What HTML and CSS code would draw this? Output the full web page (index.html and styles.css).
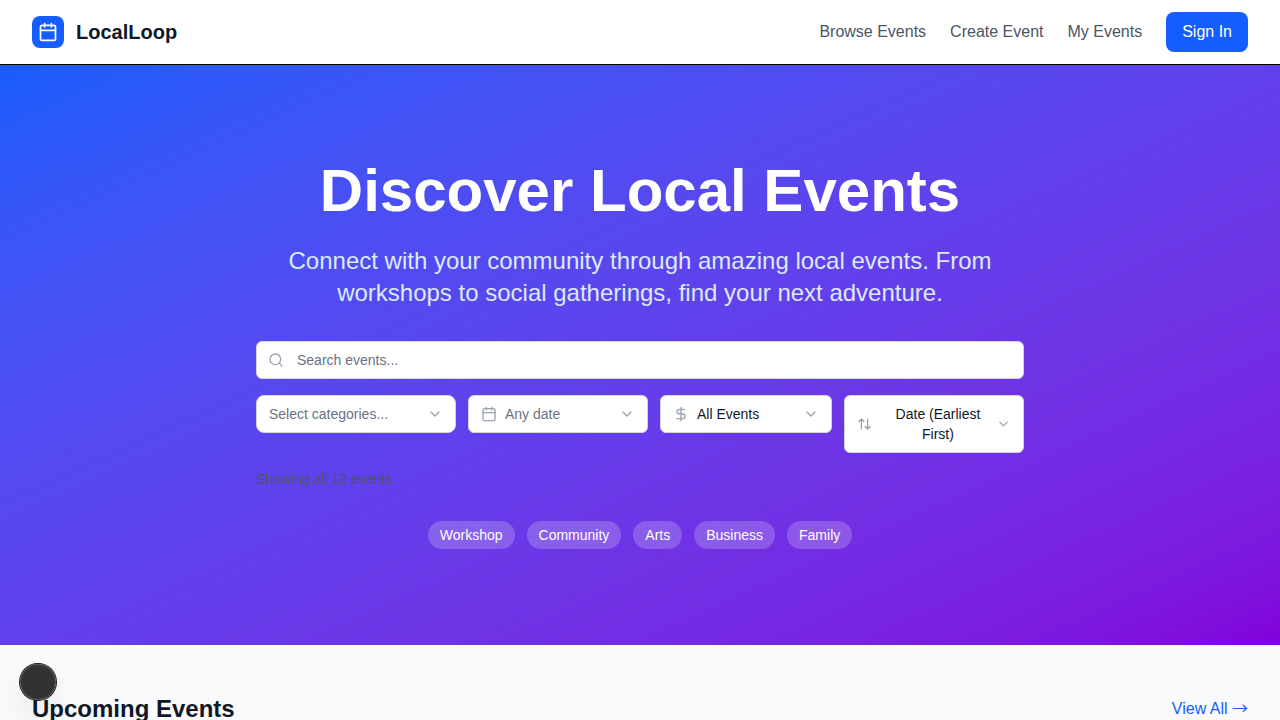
FILE: index.html
```html
<!DOCTYPE html>
<html lang="en">
<head>
<meta charset="utf-8">
<title>LocalLoop</title>
<link rel="stylesheet" href="styles.css">
</head>
<body>
<header class="header">
  <a class="brand">
    <span class="brand-mark"><svg class="icon icon-20" viewBox="0 0 24 24"><path d="M8 2v4M16 2v4M3 10h18"/><rect x="3" y="4" width="18" height="18" rx="2"/></svg></span>
    <span class="brand-name">LocalLoop</span>
  </a>
  <nav class="nav">
    <a>Browse Events</a>
    <a>Create Event</a>
    <a>My Events</a>
    <a class="sign-in">Sign In</a>
  </nav>
</header>
<section class="hero">
  <h1 class="hero-title">Discover Local Events</h1>
  <p class="hero-text">Connect with your community through amazing local events. From workshops to social gatherings, find your next adventure.</p>
  <div class="filters">
    <div class="field search">
      <svg class="icon icon-16" viewBox="0 0 24 24"><circle cx="11" cy="11" r="8"/><path d="m21 21-4.3-4.3"/></svg>
      <span>Search events...</span>
    </div>
    <div class="filter-row">
      <div class="field select categories">
        <span class="label muted">Select categories...</span>
        <svg class="icon icon-16" viewBox="0 0 24 24"><path d="m6 9 6 6 6-6"/></svg>
      </div>
      <div class="field select date">
        <svg class="icon icon-16" viewBox="0 0 24 24"><path d="M8 2v4M16 2v4M3 10h18"/><rect x="3" y="4" width="18" height="18" rx="2"/></svg>
        <span class="label muted">Any date</span>
        <svg class="icon icon-16" viewBox="0 0 24 24"><path d="m6 9 6 6 6-6"/></svg>
      </div>
      <div class="field select price">
        <svg class="icon icon-16" viewBox="0 0 24 24"><path d="M12 2v20M17 5H9.5a3.5 3.5 0 0 0 0 7h5a3.5 3.5 0 0 1 0 7H6"/></svg>
        <span class="label">All Events</span>
        <svg class="icon icon-16" viewBox="0 0 24 24"><path d="m6 9 6 6 6-6"/></svg>
      </div>
      <div class="field select sort">
        <svg class="icon icon-sort" viewBox="0 0 24 24"><path d="m21 16-4 4-4-4M17 20V4M3 8l4-4 4 4M7 4v16"/></svg>
        <span class="label">Date (Earliest First)</span>
        <svg class="icon icon-sort" viewBox="0 0 24 24"><path d="m6 9 6 6 6-6"/></svg>
      </div>
    </div>
    <div class="result-count">Showing all 12 events</div>
  </div>
  <div class="tags">
    <span class="tag">Workshop</span>
    <span class="tag">Community</span>
    <span class="tag">Arts</span>
    <span class="tag">Business</span>
    <span class="tag">Family</span>
  </div>
</section>
<main class="upcoming">
  <h2 class="upcoming-title">Upcoming Events</h2>
  <a class="view-all">View All <span class="arrow">→</span></a>
</main>
<div class="float-button"></div>
</body>
</html>
```
FILE: styles.css
```css
* { box-sizing: border-box; margin: 0; }
body {
  display: flex;
  flex-direction: column;
  height: 720px;
  overflow: hidden;
  background: #f9fafb;
  color: #101828;
  font: 16px/24px "Liberation Sans", Arial, sans-serif;
}
.icon {
  display: block;
  flex: none;
  fill: none;
  stroke: currentColor;
  stroke-width: 2;
  stroke-linecap: round;
  stroke-linejoin: round;
}
.icon-20 { width: 20px; height: 20px; }
.icon-16 { width: 16px; height: 16px; }
.icon-sort { width: 15px; height: 16px; }

.header {
  display: flex;
  flex: none;
  align-items: center;
  justify-content: space-between;
  height: 65px;
  padding: 0 32px;
  background: #fff;
  border-bottom: 1px solid #000;
}
.brand { display: flex; align-items: center; gap: 12px; }
.brand-mark {
  display: grid;
  place-items: center;
  width: 32px;
  height: 32px;
  border-radius: 8px;
  background: #155dfc;
  color: #fff;
}
.brand-name { font-size: 20px; line-height: 28px; font-weight: 700; }
.nav { display: flex; align-items: center; gap: 24px; color: #4a5565; }
.sign-in { padding: 8px 16px; border-radius: 8px; background: #155dfc; color: #fff; }

.hero {
  flex: none;
  height: 580px;
  padding: 96px 256px;
  background: linear-gradient(to bottom right in oklab, #155dfc, #8200db);
  text-align: center;
}
.hero-title {
  margin-bottom: 24px;
  color: #fff;
  font-size: 60px;
  line-height: 60px;
  font-weight: 700;
}
.hero-text { margin-bottom: 32px; color: #dbeafe; font-size: 24px; line-height: 32px; }

.filters { display: flex; flex-direction: column; gap: 16px; font-size: 14px; line-height: 20px; }
.field {
  display: flex;
  align-items: center;
  border: 1px solid #d1d5dc;
  border-radius: 6px;
  background: #fff;
  color: #101828;
}
.field .icon { color: #99a1af; }
.search { gap: 13px; height: 38px; padding: 0 11px; color: #6a7282; }
.filter-row { display: flex; align-items: flex-start; gap: 12px; }
.select { gap: 8px; padding: 8px 12px; }
.label { flex: 1; text-align: left; }
.muted { color: #6a7282; }
.categories { width: 200px; border-radius: 8px; }
.date, .sort { width: 180px; }
.price { width: 172px; }
.sort .label { padding: 0 6px 0 14px; text-align: center; }
.result-count { color: #4a5565; text-align: left; }

.tags { display: flex; justify-content: center; gap: 12px; margin-top: 32px; font-size: 14px; line-height: 20px; }
.tag { padding: 4px 12px; border-radius: 14px; background: rgba(255, 255, 255, .2); color: #fff; }

.upcoming {
  display: flex;
  flex: 1;
  align-items: flex-start;
  justify-content: space-between;
  min-height: 0;
  padding: 48px 32px 0;
}
.upcoming-title { height: 27px; font-size: 24px; line-height: 32px; font-weight: 700; }
.view-all { height: 23px; padding-top: 4px; color: #155dfc; }
.arrow { font-family: "Noto Sans CJK JP", sans-serif; line-height: 1; }

.float-button {
  position: fixed;
  left: 20px;
  bottom: 20px;
  width: 36px;
  height: 36px;
  border-radius: 50%;
  background: rgba(0, 0, 0, .8);
  backdrop-filter: blur(48px);
  box-shadow: 0 0 0 1px #171717, inset 0 0 0 1px rgba(255, 255, 255, .14), 0 16px 32px -8px rgba(0, 0, 0, .24);
}
```
